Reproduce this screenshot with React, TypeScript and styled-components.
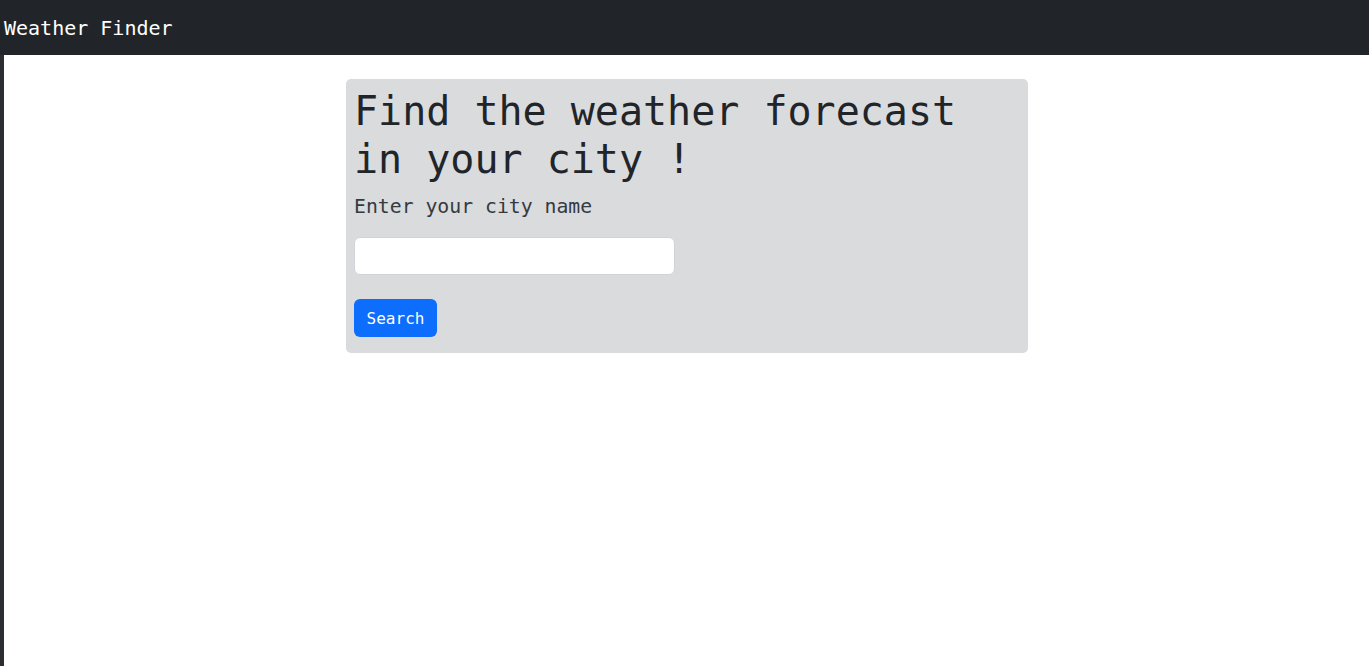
import React from "react";
import styled, { createGlobalStyle } from "styled-components";

const Global = createGlobalStyle`
  html, body { margin: 0; padding: 0; background: #ffffff; }
  body { font-family: "DejaVu Sans Mono", "Liberation Mono", monospace; color: #212529; }
  * { box-sizing: border-box; }
`;

const Navbar = styled.nav`
  height: 55px;
  background: #212529;
  display: flex;
  align-items: center;
  padding-left: 4px;
`;

const Brand = styled.span`
  color: #ffffff;
  font-size: 20px;
  line-height: 30px;
`;

const Main = styled.main`
  min-height: 611px;
  border-left: 4px solid #2c2d31;
  background: #ffffff;
  display: flex;
  justify-content: center;
  padding-top: 24px;
  padding-left: 1px;
  align-items: flex-start;
`;

const Card = styled.section`
  width: 682px;
  background: #dadbdd;
  border-radius: 5px;
  padding: 8px 8px 16px 8px;
`;

const Title = styled.h1`
  margin: 0 0 8px 0;
  font-size: 40px;
  line-height: 48px;
  font-weight: 500;
  color: #212529;
`;

const Lead = styled.p`
  margin: 0 0 15px 0;
  padding-top: 1px;
  font-size: 19.8px;
  line-height: 30px;
  font-weight: 300;
  color: #343a40;
`;

const Input = styled.input`
  display: block;
  width: 321px;
  height: 38px;
  border: 1px solid #ced4da;
  border-radius: 6px;
  background: #ffffff;
  margin: 0 0 24px 0;
  padding: 6px 12px;
  font: inherit;
`;

const Button = styled.button`
  height: 38px;
  width: 83px;
  padding: 0;
  border: none;
  border-radius: 6px;
  background: #0d6efd;
  color: #ffffff;
  font-family: inherit;
  font-size: 16px;
  cursor: pointer;
`;

export default function App() {
  return (
    <>
      <Global />
      <Navbar>
        <Brand>Weather Finder</Brand>
      </Navbar>
      <Main>
        <Card>
          <Title>Find the weather forecast in your city !</Title>
          <Lead>Enter your city name</Lead>
          <Input type="text" />
          <Button>Search</Button>
        </Card>
      </Main>
    </>
  );
}
